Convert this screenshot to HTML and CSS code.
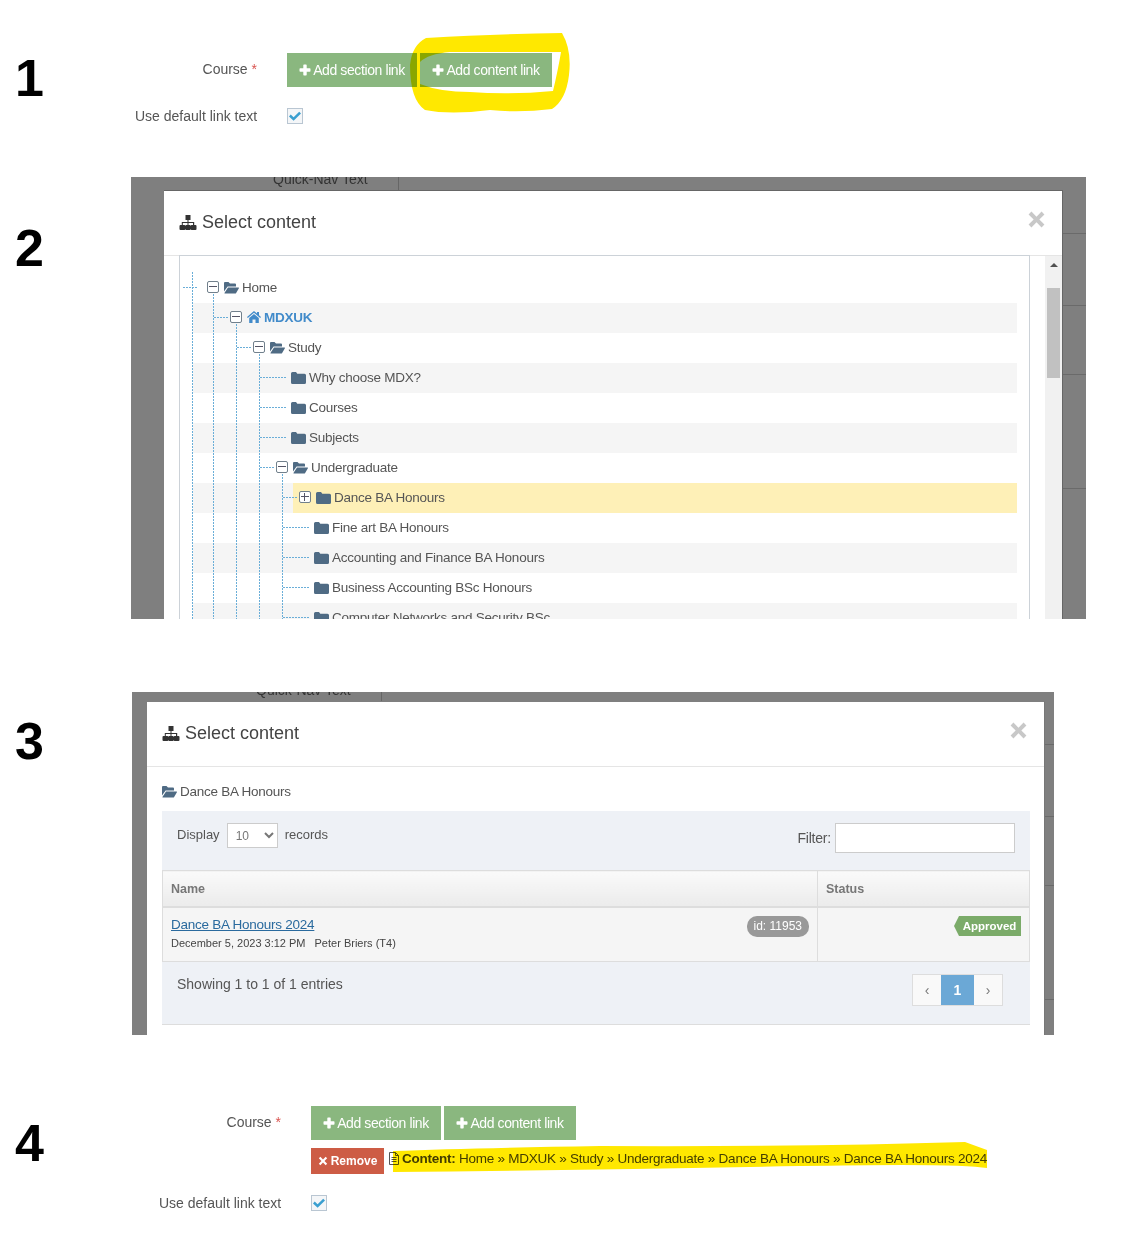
FILE: index.html
```html
<!DOCTYPE html>
<html lang="en">
<head>
<meta charset="UTF-8">
<title>Adding a content link</title>
<link rel="stylesheet" href="styles.css">
</head>
<body>

<svg class="icon-defs" width="0" height="0">
  <symbol id="i-plus" viewBox="0 0 12 12"><path d="M4.3 1.2a.7.7 0 0 1 .7-.7h2a.7.7 0 0 1 .7.7v3.100h3.100a.7.7 0 0 1 .7.7v2a.7.7 0 0 1-.7.7H7.700v3.100a.7.7 0 0 1-.7.7H5a.7.7 0 0 1-.7-.7V7.700H1.200a.7.7 0 0 1-.7-.7V5a.7.7 0 0 1 .7-.7h3.100z"/></symbol>
  <symbol id="i-times" viewBox="0 0 12 12"><path d="M2.800 1 6 4.200 9.200 1 11 2.800 7.800 6 11 9.200 9.200 11 6 7.800 2.800 11 1 9.200 4.200 6 1 2.800z"/></symbol>
  <symbol id="i-sitemap" viewBox="0 0 18 15"><path d="M6.500 0h5v5H9.500V7H15.200v3H16.500a1 1 0 0 1 1 1v3a1 1 0 0 1-1 1h-3.800a1 1 0 0 1-1-1v-3a1 1 0 0 1 1-1h1.300V8H9.500v2h1.200a1 1 0 0 1 1 1v3a1 1 0 0 1-1 1H7.300a1 1 0 0 1-1-1v-3a1 1 0 0 1 1-1h1.200V8H3.800v2h1.500a1 1 0 0 1 1 1v3a1 1 0 0 1-1 1H1.500a1 1 0 0 1-1-1v-3a1 1 0 0 1 1-1h1.300V7H8.500V5h-2z"/></symbol>
  <symbol id="i-folder" viewBox="0 0 15 13"><path d="M0 2.500A1.500 1.500 0 0 1 1.500 1H5l1.300 1.700h7.200A1.500 1.500 0 0 1 15 4.200v7.300a1.500 1.500 0 0 1-1.500 1.500h-12A1.500 1.500 0 0 1 0 11.500z"/></symbol>
  <symbol id="i-folder-open" viewBox="0 0 15 13"><path d="M0 10.500V2a1 1 0 0 1 1-1h3.500L6 2.500h5a1 1 0 0 1 1 1V5.500H3.600z"/><path d="M4 6.500h10.500a.5.5 0 0 1 .4.800L12 12.200a1 1 0 0 1-.8.300H.9a.4.400 0 0 1-.3-.7z"/></symbol>
  <symbol id="i-home" viewBox="0 0 14 12"><path d="M7 0 0 6l.8 1L7 1.700 13.200 7l.8-1-2-1.700V1h-2v1.600z"/><path d="M7 3 2.200 7.100V12h3.300V8.500h3V12h3.300V7.100z"/></symbol>
  <symbol id="i-check" viewBox="0 0 12 10"><path d="M1.700 3.600 4.600 6.300 10.200.8 12 2.600 4.600 9.800 0 5.400z"/></symbol>
</svg>

<!-- 1 -->
<section class="step step-form-first">
  <div class="step-num num-1">1</div>
  <div class="link-form">
    <div class="form-row">
      <div class="form-label">Course <span class="required">*</span></div>
      <div class="button-row">
        <button type="button" class="add-button"><svg class="plus"><use href="#i-plus"/></svg>Add section link</button>
        <button type="button" class="add-button wide"><svg class="plus"><use href="#i-plus"/></svg>Add content link</button>
      </div>
    </div>
    <div class="form-row check-row">
      <div class="form-label">Use default link text</div>
      <span class="checkbox"><svg><use href="#i-check"/></svg></span>
    </div>
  </div>
</section>

<!-- 2 -->
<section class="step">
  <div class="step-num num-2">2</div>
  <div class="backdrop backdrop-tree">
    <div class="quick-nav">Quick-Nav Text</div>
    <div class="modal">
      <div class="modal-header">
        <svg class="sitemap"><use href="#i-sitemap"/></svg>
        <div class="modal-title">Select content</div>
        <svg class="close"><use href="#i-times"/></svg>
      </div>
      <div class="modal-body">
        <div class="tree">
          <div class="tree-line line-0"></div>
          <div class="tree-line line-1"></div>
          <div class="tree-line line-2"></div>
          <div class="tree-line line-3"></div>
          <div class="tree-line line-4"></div>

          <div class="row depth-0">
            <span class="conn conn-root"></span><span class="toggle minus"></span>
            <svg class="folder"><use href="#i-folder-open"/></svg><span>Home</span>
          </div>
          <div class="row stripe depth-1">
            <span class="conn"></span><span class="toggle minus"></span>
            <svg class="home"><use href="#i-home"/></svg><span class="site-name">MDXUK</span>
          </div>
          <div class="row depth-2">
            <span class="conn"></span><span class="toggle minus"></span>
            <svg class="folder"><use href="#i-folder-open"/></svg><span>Study</span>
          </div>
          <div class="row stripe depth-3">
            <span class="conn leaf"></span>
            <svg class="folder"><use href="#i-folder"/></svg><span>Why choose MDX?</span>
          </div>
          <div class="row depth-3">
            <span class="conn leaf"></span>
            <svg class="folder"><use href="#i-folder"/></svg><span>Courses</span>
          </div>
          <div class="row stripe depth-3">
            <span class="conn leaf"></span>
            <svg class="folder"><use href="#i-folder"/></svg><span>Subjects</span>
          </div>
          <div class="row depth-3">
            <span class="conn"></span><span class="toggle minus"></span>
            <svg class="folder"><use href="#i-folder-open"/></svg><span>Undergraduate</span>
          </div>
          <div class="row selected depth-4">
            <span class="conn"></span><span class="toggle plus-box"></span>
            <svg class="folder"><use href="#i-folder"/></svg><span>Dance BA Honours</span>
          </div>
          <div class="row depth-4">
            <span class="conn leaf"></span>
            <svg class="folder"><use href="#i-folder"/></svg><span>Fine art BA Honours</span>
          </div>
          <div class="row stripe depth-4">
            <span class="conn leaf"></span>
            <svg class="folder"><use href="#i-folder"/></svg><span>Accounting and Finance BA Honours</span>
          </div>
          <div class="row depth-4">
            <span class="conn leaf"></span>
            <svg class="folder"><use href="#i-folder"/></svg><span>Business Accounting BSc Honours</span>
          </div>
          <div class="row stripe depth-4">
            <span class="conn leaf"></span>
            <svg class="folder"><use href="#i-folder"/></svg><span>Computer Networks and Security BSc</span>
          </div>
        </div>
        <div class="scrollbar">
          <div class="scroll-up"></div>
          <div class="scroll-thumb"></div>
        </div>
      </div>
    </div>
  </div>
</section>

<!-- 3 -->
<section class="step step-records">
  <div class="step-num num-3">3</div>
  <div class="backdrop backdrop-records">
    <div class="quick-nav">Quick-Nav Text</div>
    <div class="modal">
      <div class="modal-header">
        <svg class="sitemap"><use href="#i-sitemap"/></svg>
        <div class="modal-title">Select content</div>
        <svg class="close"><use href="#i-times"/></svg>
      </div>
      <div class="section-title">
        <svg class="folder"><use href="#i-folder-open"/></svg>Dance BA Honours
      </div>
      <div class="records">
        <div class="records-top">
          <label class="display-label">Display
            <select class="page-size"><option>10</option></select>
            records
          </label>
          <label class="filter-label">Filter:<input class="filter-input" type="text"></label>
        </div>
        <table class="records-table">
          <thead>
            <tr><th class="col-name">Name</th><th>Status</th></tr>
          </thead>
          <tbody>
            <tr>
              <td class="col-name">
                <div class="name-line">
                  <a href="#" class="record-link">Dance BA Honours 2024</a>
                  <span class="id-pill">id: 11953</span>
                </div>
                <div class="record-meta"><span>December 5, 2023 3:12 PM</span><span>Peter Briers (T4)</span></div>
              </td>
              <td class="col-status"><span class="approved">Approved</span></td>
            </tr>
          </tbody>
        </table>
        <div class="records-foot">
          <div class="entries">Showing 1 to 1 of 1 entries</div>
          <div class="pager">
            <span class="page-arrow">‹</span><span class="page-current">1</span><span class="page-arrow">›</span>
          </div>
        </div>
      </div>
    </div>
  </div>
</section>

<!-- 4 -->
<section class="step step-form-last">
  <div class="step-num num-4">4</div>
  <div class="link-form shifted">
    <div class="form-row">
      <div class="form-label">Course <span class="required">*</span></div>
      <div class="form-stack">
        <div class="button-row">
          <button type="button" class="add-button"><svg class="plus"><use href="#i-plus"/></svg>Add section link</button>
          <button type="button" class="add-button wide"><svg class="plus"><use href="#i-plus"/></svg>Add content link</button>
        </div>
        <div class="chosen">
          <button type="button" class="remove-button"><svg><use href="#i-times"/></svg>Remove</button>
          <svg class="doc" viewBox="0 0 12 13"><path d="M1.500.5h6l3 3v9h-9z M7.500.5v3h3 M3.500 5.500h5 M3.500 7.500h5 M3.500 9.500h5" fill="none" stroke="#555"/></svg>
          <span class="chosen-path"><b>Content:</b> Home » MDXUK » Study » Undergraduate » Dance BA Honours » Dance BA Honours 2024</span>
        </div>
      </div>
    </div>
    <div class="form-row check-row">
      <div class="form-label">Use default link text</div>
      <span class="checkbox"><svg><use href="#i-check"/></svg></span>
    </div>
  </div>
</section>

<!-- yellow marker pen scribbled over the screenshot -->
<svg class="marker" width="1141" height="1250" viewBox="0 0 1141 1250">
  <path fill-rule="evenodd" d="M426 38Q500 34 562 33Q572 50 569 75Q566 100 552 109Q520 113 490 110Q450 115 425 110Q410 100 410 65Q412 45 426 38ZM420 62Q428 54 450 52L561 52Q558 70 553 91Q510 95 470 92Q440 92 420 84Z"/>
  <path d="M393 1151Q470 1148 600 1146Q800 1147 965 1142L987 1150L987 1168Q960 1163 800 1166Q600 1170 393 1172Z"/>
</svg>

</body>
</html>
```

FILE: styles.css
```css
body {
  margin: 0;
  position: relative;
  height: 1250px;
  overflow: hidden;
  background: #fff;
  font-family: "Liberation Sans", Arial, sans-serif;
  font-size: 14px;
  color: #555;
}

.icon-defs {
  display: block;
  height: 0;
}

.marker {
  position: absolute;
  top: 0;
  left: 0;
  fill: #ffe800;
  mix-blend-mode: multiply;
  pointer-events: none;
}

/* steps */
.step {
  display: flex;
}

.step-form-first {
  height: 177px;
}

.step-records {
  margin-top: 73px;
}

.step-form-last {
  height: 215px;
}

.step-num {
  flex: none;
  box-sizing: border-box;
  width: 131px;
  padding-left: 15px;
  font-size: 52px;
  line-height: 52px;
  font-weight: bold;
  color: #000;
}

.num-1 { padding-top: 52px; }
.num-2 { padding-top: 45px; }
.num-3 { padding-top: 23px; margin-right: 1px; }
.num-4 { padding-top: 82px; }

/* course form */
.link-form {
  padding: 53px 0 0 4px;
  display: flex;
  flex-direction: column;
  gap: 13px;
}

.link-form.shifted {
  padding: 71px 0 0 28px;
}

.form-row {
  display: flex;
  gap: 30px;
}

.form-label {
  flex: none;
  width: 122px;
  text-align: right;
  line-height: 32px;
  white-space: nowrap;
}

.required {
  color: #d9534f;
}

.button-row {
  display: flex;
  gap: 3px;
}

.form-stack {
  display: flex;
  flex-direction: column;
  gap: 8px;
}

.add-button {
  width: 130px;
  height: 34px;
  padding: 0;
  border: none;
  background: #8ab77f;
  color: #fff;
  font-family: inherit;
  font-size: 14px;
  letter-spacing: -0.4px;
  display: flex;
  align-items: center;
  justify-content: center;
  gap: 2px;
}

.add-button.wide {
  width: 132px;
}

.plus {
  width: 12px;
  height: 12px;
  fill: #fff;
}

.check-row {
  align-items: center;
}

.checkbox {
  box-sizing: border-box;
  width: 16px;
  height: 16px;
  border: 1px solid #b9c6d2;
  background: #f4f6f8;
  display: flex;
  align-items: center;
  justify-content: center;
}

.checkbox svg {
  width: 12px;
  height: 10px;
  fill: #3a9fd0;
}

.chosen {
  display: flex;
  align-items: flex-start;
  height: 26px;
  font-size: 13.500px;
  letter-spacing: -0.25px;
  line-height: 22px;
}

.remove-button {
  width: 73px;
  height: 26px;
  padding: 0;
  border: none;
  background: #cd5c45;
  color: #fff;
  font-family: inherit;
  font-size: 12px;
  font-weight: bold;
  display: flex;
  align-items: center;
  justify-content: center;
  gap: 3px;
}

.remove-button svg {
  width: 10px;
  height: 10px;
  fill: #fff;
}

.doc {
  width: 12px;
  height: 13px;
  margin: 4px 2px 0 4px;
  flex: none;
}

.chosen-path {
  white-space: nowrap;
  color: #444;
}

/* grey backdrop with the modal on it */
.backdrop {
  position: relative;
  flex: none;
  overflow: hidden;
  background-color: #7f7f7f;
  background-repeat: no-repeat;
}

.backdrop-tree {
  width: 955px;
  height: 442px;
  padding: 13px 23px 0 33px;
  box-sizing: border-box;
  background-image: linear-gradient(#6a6a6a, #6a6a6a), linear-gradient(#6a6a6a, #6a6a6a), linear-gradient(#6a6a6a, #6a6a6a), linear-gradient(#6a6a6a, #6a6a6a);
  background-size: 23px 1px;
  background-position: right 0 top 56px, right 0 top 128px, right 0 top 197px, right 0 top 311px;
}

.backdrop-records {
  width: 922px;
  height: 343px;
  padding: 9px 9px 0 15px;
  box-sizing: border-box;
  background-image: linear-gradient(#6a6a6a, #6a6a6a), linear-gradient(#6a6a6a, #6a6a6a), linear-gradient(#6a6a6a, #6a6a6a), linear-gradient(#6a6a6a, #6a6a6a);
  background-size: 9px 1px;
  background-position: right 0 top 52px, right 0 top 124px, right 0 top 193px, right 0 top 307px;
}

.quick-nav {
  position: absolute;
  top: -7px;
  left: 142px;
  padding-right: 30px;
  height: 21px;
  line-height: 18px;
  border-right: 1px solid #666;
  color: #333;
}

.backdrop-records .quick-nav {
  left: 124px;
  top: -11px;
}

.modal {
  position: relative;
  box-sizing: border-box;
  height: 700px;
  background: #fff;
  border-top: 1px solid #666;
  border-right: 1px solid #666;
}

.backdrop-records .modal {
  border-top-color: #7f7f7f;
  border-right-color: #777;
}

.modal-header {
  box-sizing: border-box;
  height: 65px;
  padding: 0 16px 2px 15px;
  border-bottom: 1px solid #e5e5e5;
  display: flex;
  align-items: center;
  gap: 5px;
}

.modal-title {
  flex: 1;
  font-size: 18px;
  color: #444;
}

.sitemap {
  width: 18px;
  height: 15px;
  fill: #333;
}

.close {
  width: 19px;
  height: 19px;
  margin-top: -6px;
  fill: #c8c8c8;
}

.modal-body {
  display: flex;
  height: 500px;
  padding-left: 15px;
}

/* tree */
.tree {
  position: relative;
  box-sizing: border-box;
  width: 851px;
  padding: 17px 12px 0 0;
  border: 1px solid #ccd2d8;
  border-bottom: none;
  margin-top: -1px;
  font-size: 13.500px;
  letter-spacing: -0.25px;
}

.tree-line {
  position: absolute;
  bottom: 0;
  width: 1px;
  background: linear-gradient(#6aaed8 2px, transparent 2px) 0 0 / 1px 3px repeat-y;
}

.line-0 { left: 12px; top: 16px; }
.line-1 { left: 33px; top: 35px; }
.line-2 { left: 56px; top: 65px; }
.line-3 { left: 79px; top: 95px; }
.line-4 { left: 102px; top: 215px; }

.row {
  box-sizing: border-box;
  height: 30px;
  padding-bottom: 2px;
  display: flex;
  align-items: center;
  white-space: nowrap;
}

.row.stripe {
  background: linear-gradient(to right, transparent 13px, #f5f5f5 13px);
}

.row.selected {
  background: linear-gradient(to right, transparent 13px, #f5f5f5 13px, #f5f5f5 113px, #fef0b7 113px);
}

.depth-0 { padding-left: 3px; }
.depth-1 { padding-left: 34px; }
.depth-2 { padding-left: 57px; }
.depth-3 { padding-left: 80px; }
.depth-4 { padding-left: 103px; }

.conn {
  flex: none;
  width: 15px;
  height: 1px;
  margin-right: 1px;
  background: linear-gradient(to right, #6aaed8 2px, transparent 2px) 0 0 / 3px 1px repeat-x;
}

.conn.conn-root {
  margin-right: 9px;
}

.conn.leaf {
  width: 27px;
  margin-right: 4px;
}

.toggle {
  position: relative;
  flex: none;
  box-sizing: border-box;
  width: 12px;
  height: 12px;
  margin-right: 5px;
  border: 1px solid #71808c;
  border-radius: 2px;
  background: #fff;
}

.toggle::before {
  content: "";
  position: absolute;
  left: 1px;
  right: 1px;
  top: 4px;
  height: 1px;
  background: #556;
}

.toggle.plus-box::after {
  content: "";
  position: absolute;
  top: 1px;
  bottom: 1px;
  left: 4px;
  width: 1px;
  background: #556;
}

.folder {
  flex: none;
  width: 15px;
  height: 13px;
  margin-right: 3px;
  fill: #4f6b84;
}

.home {
  flex: none;
  width: 14px;
  height: 12px;
  margin-right: 3px;
  fill: #428bca;
}

.site-name {
  font-weight: bold;
  color: #428bca;
}

.scrollbar {
  box-sizing: border-box;
  width: 17px;
  margin-left: 15px;
  padding: 0 2px;
  background: #f1f1f1;
}

.scroll-up {
  width: 0;
  margin: 7px auto 0;
  border: 4px solid transparent;
  border-top: none;
  border-bottom-color: #505050;
}

.scroll-thumb {
  height: 90px;
  margin-top: 21px;
  background: #c1c1c1;
}

/* records table */
.section-title {
  display: flex;
  align-items: center;
  box-sizing: border-box;
  height: 44px;
  padding: 4px 0 0 15px;
  font-size: 13.500px;
  letter-spacing: -0.25px;
}

.records {
  box-sizing: border-box;
  width: 868px;
  height: 214px;
  margin-left: 15px;
  background: #eef1f6;
  border-bottom: 1px solid #ddd;
}

.records-top {
  display: flex;
  justify-content: space-between;
  height: 59px;
  padding: 12px 15px 0;
  box-sizing: border-box;
}

.display-label {
  display: flex;
  align-items: flex-start;
  gap: 7px;
  font-size: 13px;
  line-height: 23px;
}

.page-size {
  width: 51px;
  height: 25px;
  padding: 0 4px;
  background: #fff;
  border: 1px solid #ccc;
  font-family: inherit;
  font-size: 12px;
  color: #777;
}

.filter-label {
  display: flex;
  align-items: center;
  gap: 4px;
  height: 30px;
  letter-spacing: -0.2px;
}

.filter-input {
  box-sizing: border-box;
  width: 180px;
  height: 30px;
  background: #fff;
  border: 1px solid #ccc;
}

.records-table {
  width: 100%;
  table-layout: fixed;
  border-collapse: collapse;
}

.records-table th {
  height: 35px;
  padding: 0 8px;
  text-align: left;
  font-size: 12.500px;
  color: #777;
  border: 1px solid #ddd;
  border-bottom-width: 2px;
  background: linear-gradient(#fafafa, #ebebeb);
}

.records-table th.col-name,
.records-table td.col-name {
  width: 638px;
}

.records-table td {
  height: 53px;
  padding: 0 8px;
  vertical-align: top;
  background: #f5f5f5;
  border: 1px solid #ddd;
}

.name-line {
  display: flex;
  justify-content: space-between;
  align-items: flex-start;
  padding-top: 8px;
}

.record-link {
  color: #2a6a9e;
  font-size: 13.500px;
  letter-spacing: -0.25px;
  line-height: 17px;
}

.id-pill {
  padding: 0 7px;
  height: 21px;
  line-height: 20px;
  border-radius: 10px;
  background: #999;
  color: #fff;
  font-size: 12px;
}

.record-meta {
  display: flex;
  gap: 9px;
  font-size: 11px;
  line-height: 13px;
  color: #444;
}

.col-status {
  text-align: right;
}

.approved {
  display: inline-block;
  box-sizing: border-box;
  width: 67px;
  height: 20px;
  margin-top: 8px;
  padding-left: 4px;
  line-height: 20px;
  text-align: center;
  color: #fff;
  font-size: 11.500px;
  font-weight: bold;
  background: #7bab69;
  clip-path: polygon(5px 0, 100% 0, 100% 100%, 5px 100%, 0 50%);
}

.records-foot {
  display: flex;
  justify-content: space-between;
  padding: 12px 27px 0 15px;
}

.entries {
  line-height: 20px;
}

.pager {
  display: flex;
  box-sizing: border-box;
  height: 32px;
  border: 1px solid #ddd;
  background: #f9f9f9;
  color: #777;
}

.pager span {
  display: flex;
  align-items: center;
  justify-content: center;
}

.page-arrow {
  width: 28px;
}

.page-current {
  width: 33px;
  background: #6ba8d6;
  color: #fff;
  font-weight: bold;
}
```
